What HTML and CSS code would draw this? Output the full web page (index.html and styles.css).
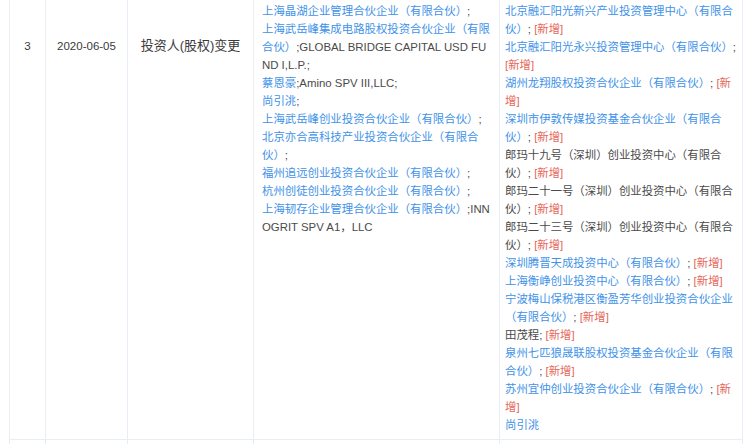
FILE: index.html
```html
<!DOCTYPE html>
<html>
<head>
    <title>变更记录</title>
    <link rel="stylesheet" href="styles.css">
</head>
<body>
    <table class="change-table">
        <colgroup>
            <col class="w-no">
            <col class="w-date">
            <col class="w-type">
            <col class="w-before">
            <col class="w-after">
        </colgroup>
        <tr class="first-row">
            <td class="meta col-no">3</td>
            <td class="meta col-date">2020-06-05</td>
            <td class="meta col-type">投资人(股权)变更</td>
            <!-- 变更前 -->
            <td class="list col-before">
                <div><a class="link">上海晶湖企业管理合伙企业（有限合伙）</a>;</div>
                <div><a class="link">上海武岳峰集成电路股权投资合伙企业（有限合伙）</a>;GLOBAL BRIDGE CAPITAL USD FUND I,L.P.;</div>
                <div><a class="link">蔡恩豪</a>;Amino SPV III,LLC;</div>
                <div><a class="link">尚引洮</a>;</div>
                <div><a class="link">上海武岳峰创业投资合伙企业（有限合伙）</a>;</div>
                <div><a class="link">北京亦合高科技产业投资合伙企业（有限合伙）</a>;</div>
                <div><a class="link">福州追远创业投资合伙企业（有限合伙）</a>;</div>
                <div><a class="link">杭州创徒创业投资合伙企业（有限合伙）</a>;</div>
                <div><a class="link">上海韧存企业管理合伙企业（有限合伙）</a>;INNOGRIT SPV A1，LLC</div>
            </td>
            <!-- 变更后 -->
            <td class="list col-after">
                <div><a class="link">北京融汇阳光新兴产业投资管理中心（有限合伙）</a>; <span class="tag">[新增]</span></div>
                <div><a class="link">北京融汇阳光永兴投资管理中心（有限合伙）</a>; <span class="tag">[新增]</span></div>
                <div><a class="link">湖州龙翔股权投资合伙企业（有限合伙）</a>; <span class="tag">[新增]</span></div>
                <div><a class="link">深圳市伊敦传媒投资基金合伙企业（有限合伙）</a>; <span class="tag">[新增]</span></div>
                <div>郎玛十九号（深圳）创业投资中心（有限合伙）; <span class="tag">[新增]</span></div>
                <div>郎玛二十一号（深圳）创业投资中心（有限合伙）; <span class="tag">[新增]</span></div>
                <div>郎玛二十三号（深圳）创业投资中心（有限合伙）; <span class="tag">[新增]</span></div>
                <div><a class="link">深圳腾晋天成投资中心（有限合伙）</a>; <span class="tag">[新增]</span></div>
                <div><a class="link">上海衡峥创业投资中心（有限合伙）</a>; <span class="tag">[新增]</span></div>
                <div><a class="link">宁波梅山保税港区衡盈芳华创业投资合伙企业（有限合伙）</a>; <span class="tag">[新增]</span></div>
                <div>田茂程; <span class="tag">[新增]</span></div>
                <div><a class="link">泉州七匹狼晟联股权投资基金合伙企业（有限合伙）</a>; <span class="tag">[新增]</span></div>
                <div><a class="link">苏州宜仲创业投资合伙企业（有限合伙）</a>; <span class="tag">[新增]</span></div>
                <div><a class="link">尚引洮</a></div>
            </td>
        </tr>
        <tr class="next-row">
            <td></td>
            <td></td>
            <td></td>
            <td></td>
            <td></td>
        </tr>
    </table>
</body>
</html>
```

FILE: styles.css
```css
body {
    margin: 0;
    background-color: #ffffff;
    font-family: "Liberation Sans", "Noto Sans CJK SC", sans-serif;
    color: #4a4a4a;
}
.change-table {
    margin-left: 9px;
    width: 733px;
    table-layout: fixed;
    border-collapse: collapse;
}
.w-no { width: 36px; }
.w-date { width: 82px; }
.w-type { width: 126px; }
.w-before { width: 246px; }
.w-after { width: 243px; }
td {
    border: 1px solid #e8eef6;
    vertical-align: top;
}
.first-row td {
    border-top: none;
}
.meta {
    padding: 37px 4px 0;
    text-align: center;
    color: #3a3a3a;
    font-size: 11.5px;
    line-height: 18px;
}
.col-type {
    font-size: 13px;
}
.list {
    font-size: 11.4px;
    line-height: 18px;
    padding: 2px 8px 5px 8px;
}
.col-before {
    word-break: break-all;
}
.col-after {
    padding: 2px 4px 5px 5px;
}
.link {
    color: #4192e8;
    text-decoration: none;
    cursor: pointer;
}
.tag {
    color: #e5665a;
}
.next-row td {
    height: 8px;
    padding: 0;
}
```
